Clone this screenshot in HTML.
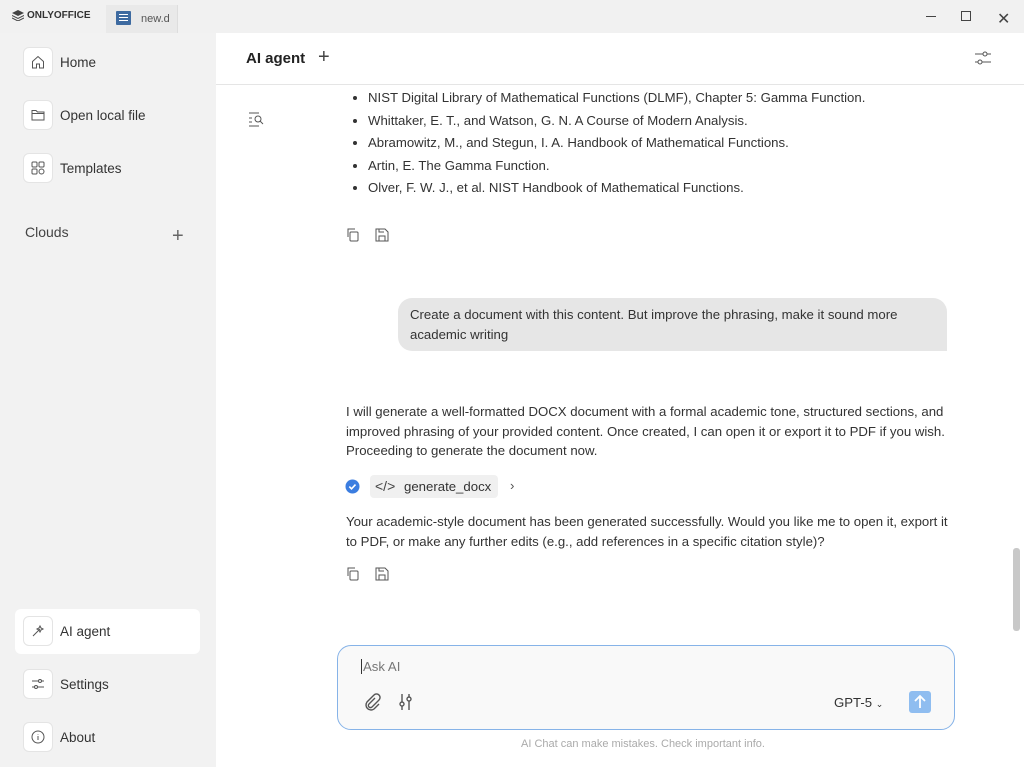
<!DOCTYPE html><html><head><style>
*{box-sizing:border-box;margin:0;padding:0}
body{width:1024px;height:767px;overflow:hidden;font-family:"Liberation Sans",Arial,sans-serif;background:#fff;position:relative;color:#333}
.top{position:absolute;left:0;top:0;width:1024px;height:33px;background:#f1f1f1}
.side{position:absolute;left:0;top:33px;width:216px;height:734px;background:#f2f2f2}
.nav{position:absolute;left:23px;display:flex;align-items:center;font-size:13.5px;color:#333}
.ib{width:30px;height:30px;background:#fff;border-radius:6px;border:1px solid #e4e4e4;display:flex;align-items:center;justify-content:center;margin-right:7px}
.a{position:absolute;font-size:13.2px;color:#333}
svg{display:block}
</style></head><body>
<div class="top">
 <div style="position:absolute;left:12px;top:10px;font-size:10px;font-weight:bold;color:#333;display:flex;align-items:center;gap:3px"><svg width="12" height="11" viewBox="0 0 12 11"><path d="M6 0L12 3 6 6 0 3Z" fill="#444"/><path d="M0 5.5L6 8.5 12 5.5M0 8L6 11 12 8" stroke="#444" fill="none"/></svg>ONLYOFFICE</div>
 <div style="position:absolute;left:106px;top:5px;width:72px;height:28px;background:#e9e9e9;border-right:1px solid #ddd"></div>
 <div style="position:absolute;left:116px;top:11px;width:15px;height:14px;background:#3d6aa0;border-radius:1px"><div style="margin:3px 3px;height:1px;background:#fff;box-shadow:0 3px #fff,0 6px #fff"></div></div>
 <div style="position:absolute;left:141px;top:13px;font-size:11px;color:#555">new.d</div>
 <div style="position:absolute;left:926px;top:16px;width:10px;height:1px;background:#444"></div>
 <div style="position:absolute;left:961px;top:11px;width:10px;height:10px;border:1px solid #444"></div>
 <div style="position:absolute;left:997px;top:9px;font-size:16px;color:#444">✕</div>
</div>
<div class="side">
 <div class="nav" style="top:14px"><div class="ib"><svg width="16" height="16" viewBox="0 0 16 16" fill="none" stroke="#555"><path d="M2.5 7.5L8 2.5l5.5 5V14h-4v-4h-3v4h-4z"/></svg></div>Home</div>
 <div class="nav" style="top:67px"><div class="ib"><svg width="16" height="16" viewBox="0 0 16 16" fill="none" stroke="#555"><path d="M2 3.5h4l1.5 1.5H14V13H2zM2 6.5h12"/></svg></div>Open local file</div>
 <div class="nav" style="top:120px"><div class="ib"><svg width="16" height="16" viewBox="0 0 16 16" fill="none" stroke="#555"><rect x="2" y="2" width="5" height="5" rx="1"/><rect x="9" y="2" width="5" height="5" rx="1"/><rect x="2" y="9" width="5" height="5" rx="1"/><rect x="9" y="9" width="5" height="5" rx="2.5"/></svg></div>Templates</div>
 <div class="a" style="left:25px;top:191px;color:#444;font-size:14px">Clouds</div>
 <div style="position:absolute;left:172px;top:192px;font-size:20px;color:#666;font-weight:300">+</div>
 <div style="position:absolute;left:15px;top:576px;width:185px;height:45px;background:#fff;border-radius:6px"></div>
 <div class="nav" style="top:583px"><div class="ib"><svg width="16" height="16" viewBox="0 0 16 16" fill="none" stroke="#555"><path d="M3 13l7-7M10 3l1 2 2 1-2 1-1 2-1-2-2-1 2-1z"/></svg></div>AI agent</div>
 <div class="nav" style="top:636px"><div class="ib"><svg width="16" height="16" viewBox="0 0 16 16" fill="none" stroke="#555"><path d="M2 5h12M2 11h12"/><circle cx="10" cy="5" r="1.5" fill="#fff"/><circle cx="6" cy="11" r="1.5" fill="#fff"/></svg></div>Settings</div>
 <div class="nav" style="top:689px"><div class="ib"><svg width="16" height="16" viewBox="0 0 16 16" fill="none" stroke="#555"><circle cx="8" cy="8" r="6"/><path d="M8 7v4M8 5v.5"/></svg></div>About</div>
</div>
<div style="position:absolute;left:246px;top:50px;font-size:15px;font-weight:bold;color:#222">AI agent</div>
<div style="position:absolute;left:318px;top:46px;font-size:20px;color:#444;font-weight:300">+</div>
<svg style="position:absolute;left:974px;top:50px" width="18" height="16" viewBox="0 0 18 16" fill="none" stroke="#555"><path d="M1 4h16M1 12h16"/><circle cx="11" cy="4" r="2" fill="#fff"/><circle cx="6" cy="12" r="2" fill="#fff"/></svg>
<div style="position:absolute;left:216px;top:84px;width:808px;height:1px;background:#e5e5e5"></div>
<svg style="position:absolute;left:248px;top:111px" width="18" height="16" viewBox="0 0 18 16" fill="none" stroke="#555"><path d="M1 2h10M1 7h3M1 11h3M1 15h10"/><circle cx="10" cy="8" r="3"/><path d="M12 10l3 3"/></svg>
<ul style="position:absolute;left:368px;top:87px;font-size:13.2px;line-height:22.6px;color:#333;list-style:disc">
<li>NIST Digital Library of Mathematical Functions (DLMF), Chapter 5: Gamma Function.</li>
<li>Whittaker, E. T., and Watson, G. N. A Course of Modern Analysis.</li>
<li>Abramowitz, M., and Stegun, I. A. Handbook of Mathematical Functions.</li>
<li>Artin, E. The Gamma Function.</li>
<li>Olver, F. W. J., et al. NIST Handbook of Mathematical Functions.</li></ul>
<svg style="position:absolute;left:345px;top:227px" width="46" height="16" viewBox="0 0 46 16" fill="none" stroke="#555"><rect x="5" y="5" width="8" height="9" rx="1"/><path d="M3 10V2h7"/><path d="M31 2h9l3 3v9H31zM34 2v3h5M34 14v-5h6v5"/></svg>
<div style="position:absolute;left:398px;top:298px;width:549px;height:53px;background:#e6e6e6;border-radius:14px 14px 0 14px;padding:7px 12px;font-size:13.2px;line-height:19.5px;color:#333">Create a document with this content. But improve the phrasing, make it sound more academic writing</div>
<div style="position:absolute;left:346px;top:402px;width:605px;font-size:13.2px;line-height:19.5px;color:#333">I will generate a well-formatted DOCX document with a formal academic tone, structured sections, and improved phrasing of your provided content. Once created, I can open it or export it to PDF if you wish. Proceeding to generate the document now.</div>
<svg style="position:absolute;left:345px;top:479px" width="15" height="15" viewBox="0 0 15 15"><circle cx="7.5" cy="7.5" r="7" fill="#3b7de0"/><path d="M4.3 7.6l2.2 2.2 4-4.2" stroke="#fff" stroke-width="1.6" fill="none"/></svg>
<div style="position:absolute;left:370px;top:475px;width:128px;height:23px;background:#f0f0f0;border-radius:4px"></div>
<div style="position:absolute;left:375px;top:478px;font-size:14px;color:#444">&lt;/&gt;</div>
<div class="a" style="left:404px;top:479px">generate_docx</div>
<div class="a" style="left:510px;top:478px;color:#555">›</div>
<div style="position:absolute;left:346px;top:512px;width:610px;font-size:13.2px;line-height:19.5px;color:#333">Your academic-style document has been generated successfully. Would you like me to open it, export it to PDF, or make any further edits (e.g., add references in a specific citation style)?</div>
<svg style="position:absolute;left:345px;top:566px" width="46" height="16" viewBox="0 0 46 16" fill="none" stroke="#555"><rect x="5" y="5" width="8" height="9" rx="1"/><path d="M3 10V2h7"/><path d="M31 2h9l3 3v9H31zM34 2v3h5M34 14v-5h6v5"/></svg>
<div style="position:absolute;left:337px;top:645px;width:618px;height:85px;border:1.5px solid #86b3e8;border-radius:14px;background:#f9f9f9"></div>
<div style="position:absolute;left:361px;top:659px;font-size:13.2px;color:#777;border-left:1px solid #333;padding-left:1px">Ask AI</div>
<svg style="position:absolute;left:362px;top:692px" width="20" height="20" viewBox="0 0 20 20" fill="none" stroke="#555" stroke-width="1.4"><path d="M13 6l-6 6a2 2 0 003 3l7-7a3.5 3.5 0 00-5-5l-7 7a5 5 0 007 7l5-5"/></svg>
<svg style="position:absolute;left:398px;top:692px" width="16" height="20" viewBox="0 0 16 20" fill="none" stroke="#555" stroke-width="1.4"><path d="M4 2v16M11 2v16"/><circle cx="4" cy="12" r="2" fill="#f9f9f9"/><circle cx="11" cy="7" r="2" fill="#f9f9f9"/></svg>
<div class="a" style="left:834px;top:695px">GPT-5 <span style="font-size:9px">⌄</span></div>
<div style="position:absolute;left:909px;top:691px;width:22px;height:22px;background:#8fbdf0;border-radius:3px"><svg width="22" height="22" viewBox="0 0 22 22" fill="none" stroke="#fff" stroke-width="1.8"><path d="M11 17V5M6 10l5-5 5 5"/></svg></div>
<div style="position:absolute;left:521px;top:738px;font-size:11px;color:#aaa">AI Chat can make mistakes. Check important info.</div>
<div style="position:absolute;left:1013px;top:548px;width:7px;height:83px;background:#c8c8c8;border-radius:3px"></div>
</body></html>
